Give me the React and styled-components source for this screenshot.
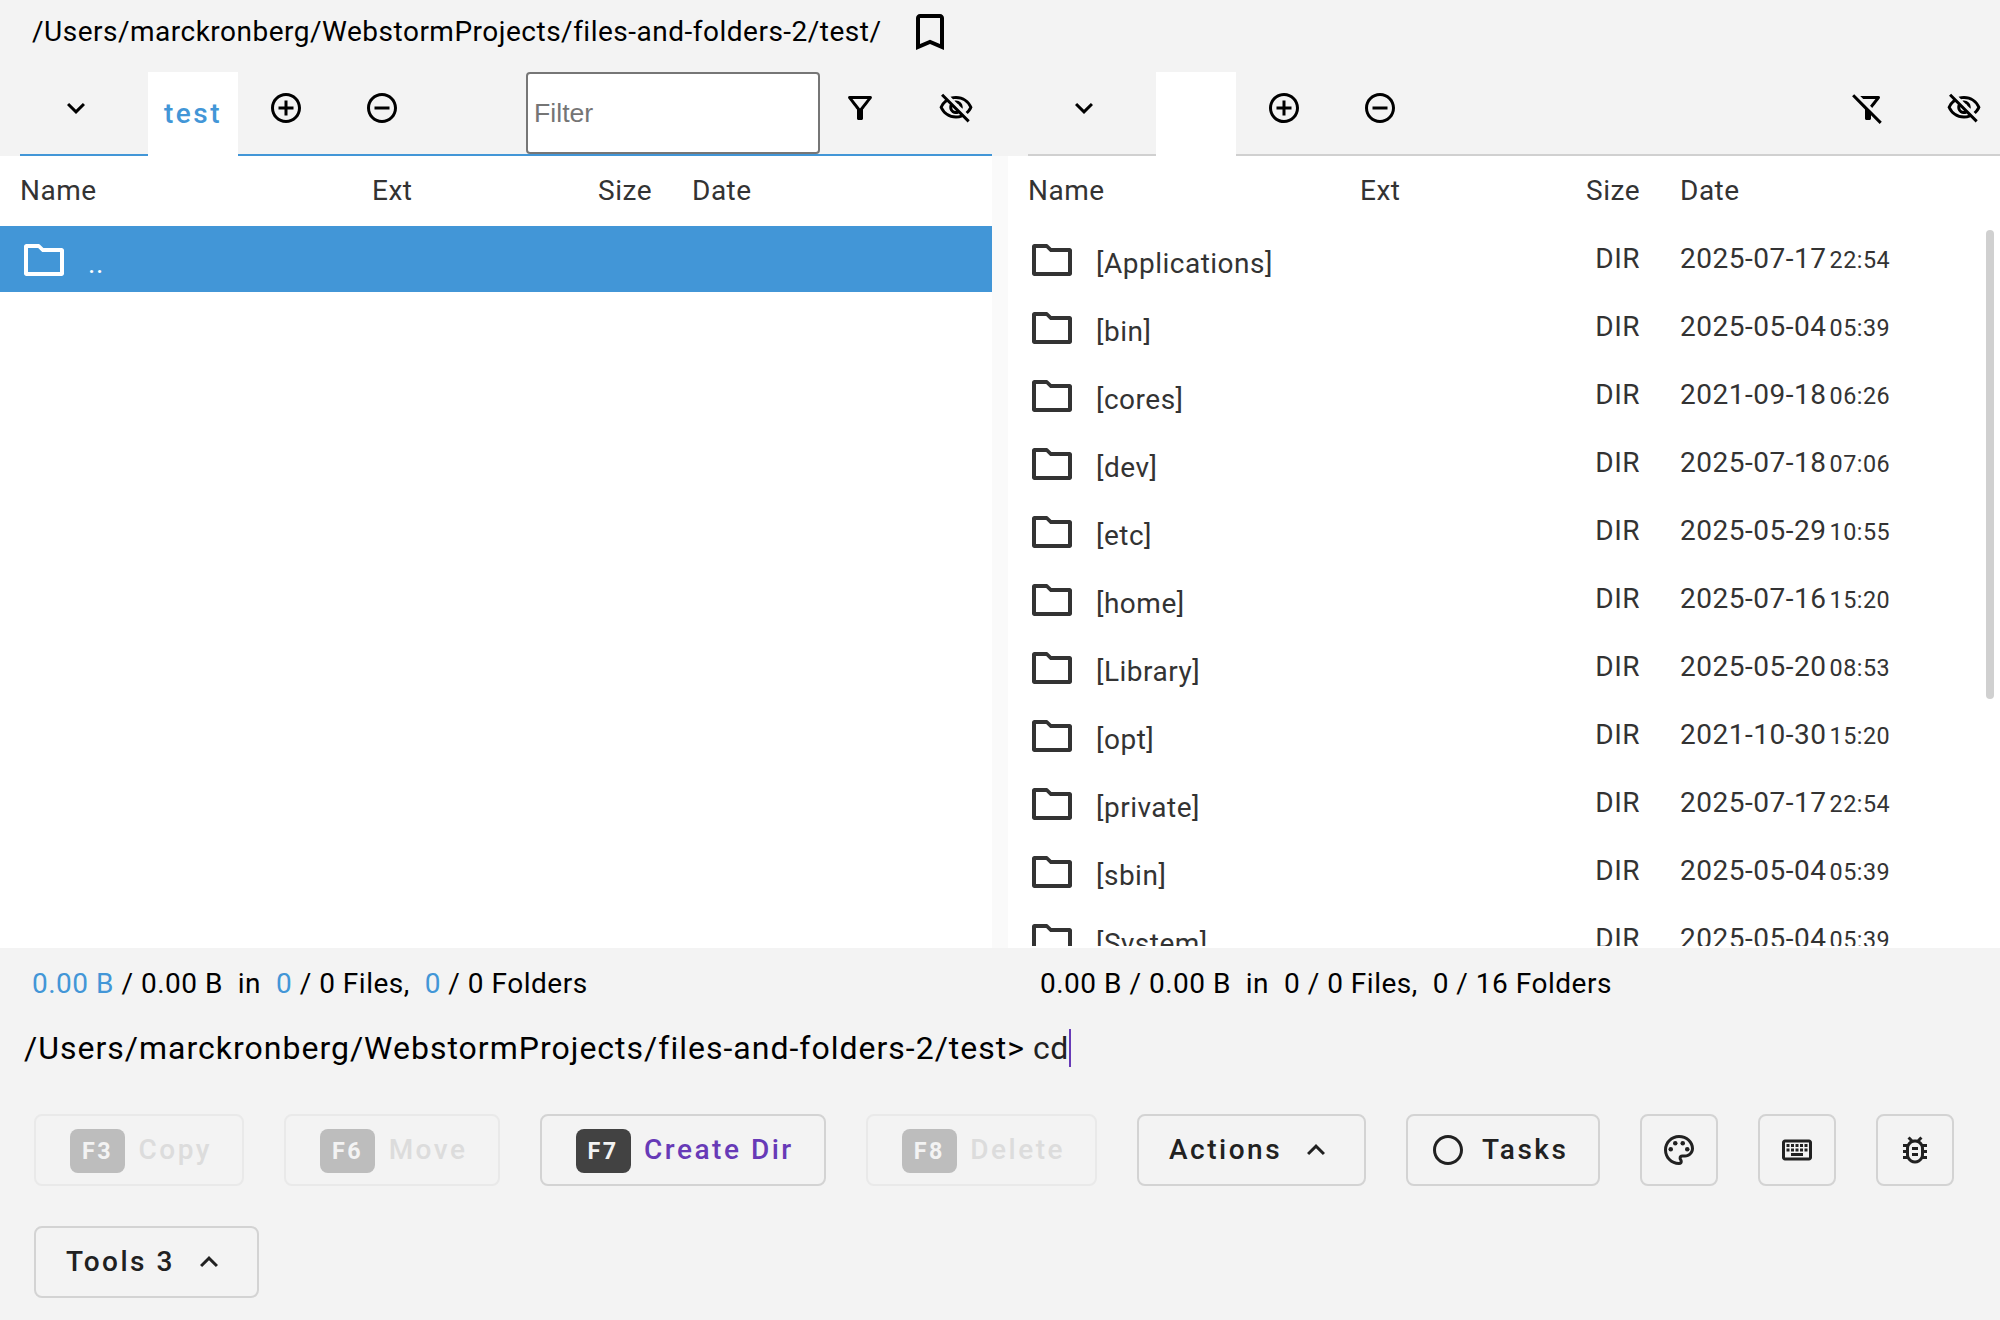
import React from "react";
import styled, { createGlobalStyle, css } from "styled-components";
import {
  MdExpandMore,
  MdExpandLess,
  MdAddCircleOutline,
  MdRemoveCircleOutline,
  MdOutlineFilterAlt,
  MdOutlineFilterAltOff,
  MdOutlineVisibilityOff,
  MdBookmarkBorder,
  MdOutlinePalette,
  MdOutlineKeyboard,
  MdOutlineBugReport,
  MdRadioButtonUnchecked,
} from "react-icons/md";

const blue = "#4296d7";
const purple = "#673ab7";

const GlobalStyle = createGlobalStyle`
  *, *::before, *::after { box-sizing: border-box; }
  body { margin: 0; background: #f3f3f3; overflow: hidden; }
`;

const Page = styled.div`
  width: 2000px;
  height: 1320px;
  display: flex;
  flex-direction: column;
  overflow: hidden;
  background: #f3f3f3;
  color: #000;
  font: 400 28px/40px Roboto, sans-serif;
  letter-spacing: 0.5px;
  svg { display: block; flex: none; }
`;

const PathBar = styled.header`
  height: 72px;
  padding: 0 32px;
  display: flex;
  align-items: flex-start;
  gap: 24px;
  svg { margin-top: 8px; }
`;

const PathText = styled.span`
  padding-top: 12px;
  white-space: nowrap;
`;

const Split = styled.div`
  display: grid;
  grid-template-columns: 992px 992px;
  column-gap: 16px;
`;

const TabBar = styled.nav`
  height: 84px;
  margin-left: 20px;
  display: flex;
  border-bottom: 2px solid ${(p) => (p.$active ? blue : "#d0d0d0")};
`;

const IconButton = styled.button`
  width: 96px;
  height: 72px;
  flex: none;
  padding: 0;
  border: 0;
  background: none;
  color: #000;
  display: flex;
  align-items: center;
  justify-content: center;
`;

const MenuSlot = styled.div`
  width: 128px;
  padding-left: 8px;
`;

const Tab = styled.div`
  width: ${(p) => p.$width}px;
  height: 84px;
  padding-top: 22px;
  background: #fff;
  color: ${blue};
  font-weight: 500;
  letter-spacing: 2.5px;
  text-align: center;
`;

const TabTools = styled.div`
  margin-left: auto;
  margin-right: -12px;
  display: flex;
`;

const FilterInput = styled.input`
  width: 294px;
  height: 82px;
  margin-right: -8px;
  padding: 0 6px;
  border: 2px solid #767676;
  border-radius: 4px;
  background: #fff;
  font: 26.667px "Liberation Sans", Arial, sans-serif;
  &::placeholder { color: #757575; opacity: 1; }
`;

const Panels = styled(Split)`
  height: 792px;
  background: #fafafa;
`;

const Panel = styled.section`
  height: 792px;
  background: #fff;
  color: #333;
  display: flex;
  flex-direction: column;
  position: relative;
`;

const rowGrid = css`
  display: grid;
  grid-template-columns: ${(p) => p.$cols};
  padding-left: 20px;
`;

const HeadRow = styled.div`
  ${rowGrid}
  height: 70px;
  padding-top: 15px;
`;

const Rows = styled.div`
  height: 720px;
  overflow: hidden;
`;

const Row = styled.div`
  ${rowGrid}
  height: 66px;
  margin-bottom: 2px;
  background: ${(p) => (p.$selected ? blue : "transparent")};
  color: ${(p) => (p.$selected ? "#fff" : "#333")};
`;

const NameCell = styled.div`
  display: flex;
  gap: 20px;
  padding-top: 10px;
  span { padding-top: 8px; }
`;

const SizeCell = styled.div`
  text-align: right;
  padding-top: ${(p) => p.$top || 0}px;
`;

const DateCell = styled.div`
  padding: ${(p) => p.$top || 0}px 0 0 40px;
  white-space: nowrap;
  small { font-size: 23.33px; margin-left: 3.2px; }
`;

const ScrollThumb = styled.div`
  position: absolute;
  right: 6px;
  top: 74px;
  width: 8px;
  height: 469px;
  border-radius: 4px;
  background: #d0d0d0;
`;

const Status = styled.div`
  height: 66px;
  padding: 16px 0 0 32px;
  white-space: pre;
  b { font-weight: 400; color: ${(p) => (p.$active ? blue : "#000")}; }
`;

const Command = styled.div`
  height: 100px;
  padding: 14px 24px 0;
  display: flex;
  font-size: 32px;
  letter-spacing: 1px;
  white-space: pre;
`;

const Typed = styled.span`
  margin-left: -1px;
  color: #222;
  letter-spacing: 0.5px;
`;

const Caret = styled.span`
  width: 2px;
  height: 38px;
  margin: 1px 0 0 0.4px;
  background: ${purple};
`;

const Actions = styled.footer`
  padding-left: 34px;
  display: flex;
  flex-wrap: wrap;
  gap: 40px;
`;

const Button = styled.button`
  height: 72px;
  padding: 0 ${(p) => p.$right ?? 30}px 0 ${(p) => p.$left ?? 30}px;
  display: flex;
  align-items: center;
  gap: ${(p) => p.$gap ?? 16}px;
  border: 2px solid ${(p) => (p.disabled ? "#e9e9e9" : "#d3d3d3")};
  border-radius: 8px;
  background: transparent;
  color: ${(p) => (p.disabled ? "#dcdcdc" : p.$accent ? purple : "#212121")};
  font: 500 28px/40px Roboto, sans-serif;
  letter-spacing: 2.5px;
  white-space: nowrap;
`;

const SquareButton = styled(Button)`
  width: 78px;
  padding: 0;
  justify-content: center;
`;

const KeyBadge = styled.kbd`
  height: 44px;
  margin: 2px 0 0 4px;
  padding: 0 12px;
  border-radius: 8px;
  background: ${(p) => (p.$muted ? "#bdbdbd" : "#424242")};
  color: #f3f3f3;
  font: 700 23.33px/44px Roboto, sans-serif;
`;

const FolderIcon = () => (
  <svg width="48" height="48" viewBox="0 0 24 24" fill="currentColor">
    <path d="M3.2 20q-.5 0-.85-.35T2 18.8V5.2q0-.5.35-.85T3.2 4h6.2q.3 0 .5.2L11.7 6h9.1q.5 0 .85.35t.35.85v11.6q0 .5-.35.85t-.85.35ZM4 18h16V8h-8.9l-2-2H4Z" />
  </svg>
);

const files = [
  ["Applications", "2025-07-17", "22:54"],
  ["bin", "2025-05-04", "05:39"],
  ["cores", "2021-09-18", "06:26"],
  ["dev", "2025-07-18", "07:06"],
  ["etc", "2025-05-29", "10:55"],
  ["home", "2025-07-16", "15:20"],
  ["Library", "2025-05-20", "08:53"],
  ["opt", "2021-10-30", "15:20"],
  ["private", "2025-07-17", "22:54"],
  ["sbin", "2025-05-04", "05:39"],
  ["System", "2025-05-04", "05:39"],
];

const leftCols = "352px 140px 140px 1fr";
const rightCols = "332px 140px 140px 1fr";

const Header = ({ cols }) => (
  <HeadRow $cols={cols}>
    <div>Name</div>
    <div>Ext</div>
    <SizeCell>Size</SizeCell>
    <DateCell>Date</DateCell>
  </HeadRow>
);

const Tabs = ({ active, label, width, children }) => (
  <TabBar $active={active}>
    <MenuSlot>
      <IconButton><MdExpandMore size={36} /></IconButton>
    </MenuSlot>
    <Tab $width={width}>{label}</Tab>
    <IconButton><MdAddCircleOutline size={36} /></IconButton>
    <IconButton><MdRemoveCircleOutline size={36} /></IconButton>
    <TabTools>
      {children}
      <IconButton><MdOutlineVisibilityOff size={36} /></IconButton>
    </TabTools>
  </TabBar>
);

const Summary = ({ active, folders }) => (
  <Status $active={active}>
    <b>0.00 B</b> / 0.00 B{"  "}in{"  "}<b>0</b> / 0 Files,{"  "}<b>0</b> / {folders} Folders
  </Status>
);

const KeyButton = ({ k, label, disabled }) => (
  <Button disabled={disabled} $accent $gap={13.4}>
    <KeyBadge $muted={disabled}>{k}</KeyBadge>
    {label}
  </Button>
);

export default function App() {
  return (
    <Page>
      <GlobalStyle />
      <PathBar>
        <PathText>/Users/marckronberg/WebstormProjects/files-and-folders-2/test/</PathText>
        <MdBookmarkBorder size={48} />
      </PathBar>
      <Split>
        <Tabs active label="test" width={90}>
          <FilterInput placeholder="Filter" />
          <IconButton><MdOutlineFilterAlt size={36} /></IconButton>
        </Tabs>
        <Tabs width={80}>
          <IconButton><MdOutlineFilterAltOff size={36} /></IconButton>
        </Tabs>
      </Split>
      <Panels>
        <Panel>
          <Header cols={leftCols} />
          <Rows>
            <Row $cols={leftCols} $selected>
              <NameCell><FolderIcon /><span>..</span></NameCell>
            </Row>
          </Rows>
        </Panel>
        <Panel>
          <Header cols={rightCols} />
          <Rows>
            {files.map(([name, date, time]) => (
              <Row key={name} $cols={rightCols}>
                <NameCell><FolderIcon /><span>[{name}]</span></NameCell>
                <div />
                <SizeCell $top={13}>DIR</SizeCell>
                <DateCell $top={13}>{date}<small>{time}</small></DateCell>
              </Row>
            ))}
          </Rows>
          <ScrollThumb />
        </Panel>
      </Panels>
      <Split>
        <Summary active folders={0} />
        <Summary folders={16} />
      </Split>
      <Command>
        {"/Users/marckronberg/WebstormProjects/files-and-folders-2/test> "}
        <Typed>cd</Typed>
        <Caret />
      </Command>
      <Actions>
        <KeyButton k="F3" label="Copy" disabled />
        <KeyButton k="F6" label="Move" disabled />
        <KeyButton k="F7" label="Create Dir" />
        <KeyButton k="F8" label="Delete" disabled />
        <Button>Actions<MdExpandLess size={36} /></Button>
        <Button $left={22} $right={29.6}><MdRadioButtonUnchecked size={36} />Tasks</Button>
        <SquareButton><MdOutlinePalette size={36} /></SquareButton>
        <SquareButton><MdOutlineKeyboard size={36} /></SquareButton>
        <SquareButton><MdOutlineBugReport size={36} /></SquareButton>
        <Button>Tools 3<MdExpandLess size={36} /></Button>
      </Actions>
    </Page>
  );
}
